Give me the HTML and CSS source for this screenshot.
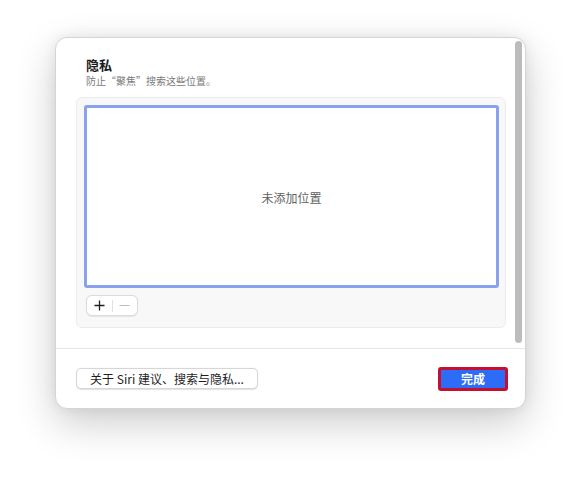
FILE: index.html
```html
<!DOCTYPE html>
<html lang="zh-CN">
<head>
<meta charset="utf-8">
<link rel="stylesheet" href="styles.css">
</head>
<body>
<div class="window">
  <div class="main">
    <div class="content">
      <div class="title">隐私</div>
      <div class="subtitle">防止“聚焦”搜索这些位置。</div>
      <div class="group">
        <div class="list"><span class="empty">未添加位置</span></div>
        <div class="segmented">
          <span class="seg plus">
            <svg width="11" height="11" viewBox="0 0 11 11"><path d="M5.5 0.5v10M0.5 5.5h10" stroke="#1f1f1f" stroke-width="1.3" fill="none"/></svg>
          </span>
          <span class="seg-div"></span>
          <span class="seg minus">
            <svg width="11" height="11" viewBox="0 0 11 11"><path d="M0.5 5.5h10" stroke="#bdbdbd" stroke-width="1.1" fill="none"/></svg>
          </span>
        </div>
      </div>
    </div>
    <div class="scrollbar"><div class="thumb"></div></div>
  </div>
  <div class="footer">
    <button class="btn">关于 Siri 建议、搜索与隐私...</button>
    <button class="btn primary">完成</button>
  </div>
</div>
</body>
</html>
```
FILE: styles.css
```css
html, body {
  margin: 0;
  background: #ffffff;
}
html {
  height: 100%;
}
body {
  min-height: 100%;
  box-sizing: border-box;
  padding: 37px 0 0 55px;
  font-family: "Noto Sans CJK SC", "Noto Sans", sans-serif;
}
.window {
  width: 469px;
  height: 370px;
  border: 1px solid #d4d4d4;
  border-radius: 12px;
  background: #ffffff;
  box-shadow: 0 14px 40px rgba(0, 0, 0, 0.2), 0 0 14px rgba(0, 0, 0, 0.07);
  overflow: hidden;
  display: flex;
  flex-direction: column;
}
.main {
  height: 310px;
  display: flex;
  flex-direction: row;
  border-bottom: 1px solid #e6e6e6;
}
.content {
  width: 430px;
  padding-left: 20px;
  display: flex;
  flex-direction: column;
}
.title {
  margin-top: 19px;
  margin-left: 10px;
  font-size: 13px;
  line-height: 16px;
  font-weight: bold;
  color: #1a1a1a;
}
.subtitle {
  margin-left: 10px;
  margin-top: 1px;
  font-size: 10px;
  line-height: 14px;
  color: #7a7a7a;
}
.group {
  margin-top: 9px;
  border: 1px solid #ececec;
  border-radius: 6px;
  background: #f8f8f8;
  padding: 7px 0 0 7px;
  box-sizing: border-box;
  height: 231px;
  width: 430px;
}
.list {
  width: 409px;
  height: 177px;
  border: 3px solid #8ba1ee;
  border-radius: 3px;
  background: #ffffff;
  display: flex;
  align-items: center;
  justify-content: center;
}
.empty {
  font-size: 12px;
  color: #5f5f5f;
  margin-top: 1px;
}
.segmented {
  margin-top: 7px;
  margin-left: 2px;
  width: 50px;
  height: 19px;
  border: 1px solid #dcdcdc;
  border-radius: 6px;
  background: #ffffff;
  display: flex;
  align-items: center;
  box-shadow: 0 0.5px 1px rgba(0,0,0,0.08);
}
.seg {
  width: 25px;
  display: flex;
  justify-content: center;
  align-items: center;
}
.seg-div {
  width: 1px;
  height: 12px;
  background: #e0e0e0;
}
.scrollbar {
  margin-left: 9px;
  padding-top: 3px;
  width: 7px;
}
.thumb {
  width: 7px;
  height: 302px;
  border-radius: 4px;
  background: #bcbcbc;
}
.footer {
  flex: 1;
  display: flex;
  flex-direction: row;
  justify-content: space-between;
  align-items: flex-start;
  padding: 19px 17px 0 20px;
}
.btn {
  font-family: "Noto Sans CJK SC", "Noto Sans", sans-serif;
  font-size: 12px;
  height: 21px;
  line-height: 19px;
  padding: 0 6px;
  border: 1px solid #d6d6d6;
  border-radius: 5px;
  background: #ffffff;
  color: #1e1e1e;
  box-shadow: 0 0.5px 1px rgba(0,0,0,0.12);
  width: 182px;
  white-space: nowrap;
}
.btn.primary {
  margin-top: -1px;
  width: 70px;
  height: 24px;
  line-height: 18px;
  border: 3px solid #c4102e;
  border-radius: 3px;
  background: #2c6cf6;
  color: #ffffff;
  font-weight: bold;
  box-shadow: none;
}
```
